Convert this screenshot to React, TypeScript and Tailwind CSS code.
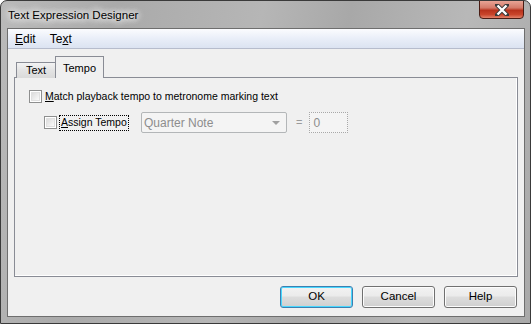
import React from "react";

const F = { fontFamily: '"Liberation Sans", Arial, sans-serif' } as const;

function Check() {
  return (
    <span className="block w-[13px] h-[13px] border border-[#8e8f8f] bg-white p-[1px] shrink-0">
      <span className="block w-full h-full bg-gradient-to-br from-[#dcdcdc] to-[#fafafa] border border-[#e0e0e0]" />
    </span>
  );
}

function Btn({ label, def }: { label: string; def?: boolean }) {
  return (
    <div
      className={
        "w-[73px] h-[22px] rounded-[3px] border flex items-center justify-center text-[11.5px] text-black " +
        (def
          ? "border-[#3c7fb1] shadow-[inset_0_0_0_1px_#48d7fe]"
          : "border-[#707070] shadow-[inset_0_0_0_1px_#fcfcfc]")
      }
      style={{
        ...F,
        background: "linear-gradient(#f2f2f2 0%, #ebebeb 45%, #dddddd 50%, #cfcfcf 100%)",
      }}
    >
      {label}
    </div>
  );
}

export default function App() {
  return (
    <div
      className="w-[531px] h-[324px] border border-[#3a3a3a] rounded-t-[7px] flex flex-col overflow-hidden"
      style={{
        ...F,
        background:
          "linear-gradient(100deg, #bababa 0%, #aaaaaa 20%, #b6b6b6 45%, #a8a8a8 60%, #b8b8b8 80%, #a9a9a9 100%)",
      }}
    >
      <div className="h-[27px] flex items-start justify-between pl-[6px] pr-[6px]">
        <div
          className="mt-[6px] text-[11.5px] text-black px-[1px]"
          style={{ textShadow: "0 0 6px #fff, 0 0 8px #fff, 0 0 10px #eee" }}
        >
          Text Expression Designer
        </div>
        <div
          className="w-[45px] h-[19px] -mt-[1px] rounded-b-[4px] border border-[#4a1c14] flex items-center justify-center"
          style={{ background: "linear-gradient(#e8a495 0%, #d47a69 40%, #b8321c 55%, #c9452b 80%, #e2826a 100%)" }}
        >
          <svg width="14" height="12" viewBox="0 0 14 12">
            <path d="M2 1 L12 11 M12 1 L2 11" stroke="#3a3a3a" strokeWidth="4.2" strokeLinecap="square" />
            <path d="M2.5 1.5 L11.5 10.5 M11.5 1.5 L2.5 10.5" stroke="#ffffff" strokeWidth="2.4" />
          </svg>
        </div>
      </div>
      <div className="ml-[6px] w-[518px] h-[289px] border border-[#6e6e6e] flex flex-col bg-[#f0f0f0]">
        <div
          className="h-[20px] border-b border-[#b6bccc] flex items-center text-[12px] text-black"
          style={{ background: "linear-gradient(#fbfcfe 0%, #e9eef8 50%, #dbe3f1 100%)" }}
        >
          <span className="ml-[7px]"><span className="underline">E</span>dit</span>
          <span className="ml-[14px]">Te<span className="underline">x</span>t</span>
        </div>
        <div className="flex-1 flex flex-col px-[6px] pt-[8px]">
          <div className="flex items-end h-[21px] pl-[2px] relative z-10 -mb-[1px]">
            <div
              className="w-[40px] h-[16px] border border-[#898c95] border-b-0 flex items-center justify-center text-[11px] text-black"
              style={{ background: "linear-gradient(#f3f3f3, #e3e3e3 50%, #dadada)" }}
            >
              Text
            </div>
            <div className="w-[49px] h-[22px] border border-[#898c95] border-b-0 -ml-[1px] bg-[#f0f0f0] flex items-start justify-center pt-[3px] text-[11px] text-black">
              Tempo
            </div>
          </div>
          <div className="w-[504px] h-[200px] border border-[#898c95] shadow-[inset_-1px_-1px_0_#ffffff] flex flex-col pl-[14px] pt-[12px] text-[10.5px] text-black">
            <div className="flex items-center h-[13px]">
              <Check />
              <span className="ml-[3px]">
                <span className="underline">M</span>atch playback tempo to metronome marking text
              </span>
            </div>
            <div className="flex items-center mt-[9px] ml-[15px] h-[21px]">
              <Check />
              <span className="ml-[2px] w-[70px] pl-[1px] h-[16px] flex items-center border border-dotted border-black">
                <span className="underline">A</span>ssign Tempo
              </span>
              <div className="ml-[12px] w-[146px] h-[21px] rounded-[2px] border border-[#b3b6b8] bg-[#f4f4f4] flex items-center justify-between pl-[2px] pr-[6px] text-[#8d8d8d] text-[12px]">
                <span>Quarter Note</span>
                <svg width="8" height="4" viewBox="0 0 8 4">
                  <path d="M0 0 H8 L4 4 Z" fill="#a0a0a0" />
                </svg>
              </div>
              <span className="ml-[9px] text-[#9a9a9a] text-[11px]">=</span>
              <div className="ml-[7px] w-[39px] h-[21px] border border-dotted border-[#a8a8a8] bg-[#f4f4f4] flex items-center pl-[3px] text-[#8d8d8d] text-[12px]">
                0
              </div>
            </div>
          </div>
          <div className="flex justify-end gap-[9px] mt-[9px] pr-[1px]">
            <Btn label="OK" def />
            <Btn label="Cancel" />
            <Btn label="Help" />
          </div>
        </div>
      </div>
    </div>
  );
}
